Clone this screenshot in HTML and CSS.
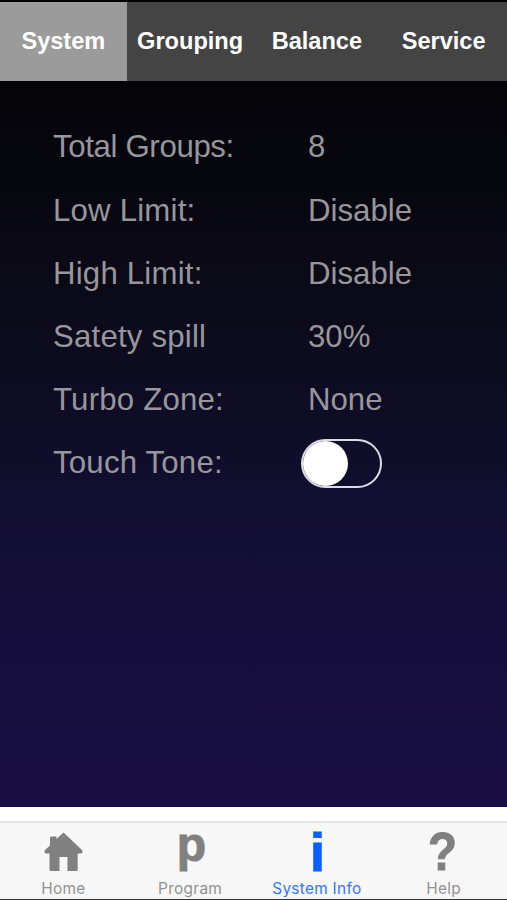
FILE: index.html
```html
<!DOCTYPE html>
<html lang="en">
<head>
<meta charset="utf-8">
<title>System Info</title>
<link rel="stylesheet" href="styles.css">
</head>
<body>
<div class="app">
  <nav class="tabs">
    <a class="tab tab-active">System</a>
    <a class="tab">Grouping</a>
    <a class="tab">Balance</a>
    <a class="tab">Service</a>
  </nav>
  <main class="panel">
    <dl class="settings">
      <dt class="tight">Total Groups:</dt><dd>8</dd>
      <dt>Low Limit:</dt><dd>Disable</dd>
      <dt>High Limit:</dt><dd>Disable</dd>
      <dt>Satety spill</dt><dd>30%</dd>
      <dt>Turbo Zone:</dt><dd>None</dd>
      <dt>Touch Tone:</dt><dd><span class="switch"><span class="knob"></span></span></dd>
    </dl>
  </main>
  <footer class="bar">
    <a class="item">
      <svg class="icon" viewBox="0 0 50 46"><path d="M25.500 7.500 44 25Q45.500 28 43 28.500H39.700V44.500Q39.700 46 38 46H29.500V32H21.500V46H13Q11.500 46 11.500 44.500V28.500H8Q5.500 28 7 25L12 20.500V13Q12 11.500 13.500 11.500H18.500V14Z"/></svg>
      <span class="label">Home</span>
    </a>
    <a class="item">
      <svg class="icon" viewBox="0 0 50 46"><text class="letter" x="26.500" y="35.500" font-size="48">p</text></svg>
      <span class="label">Program</span>
    </a>
    <a class="item item-active">
      <svg class="icon" viewBox="0 0 50 46"><text class="info" x="25.500" y="45.500" font-size="54">i</text></svg>
      <span class="label">System Info</span>
    </a>
    <a class="item">
      <svg class="icon" viewBox="0 0 50 46"><text class="letter" x="23.500" y="45" font-size="53" textLength="29" lengthAdjust="spacingAndGlyphs">?</text></svg>
      <span class="label">Help</span>
    </a>
  </footer>
</div>
</body>
</html>
```
FILE: styles.css
```css
* { box-sizing: border-box; }
body { margin: 0; background: #000; }
.app {
  width: 507px;
  height: 900px;
  display: flex;
  flex-direction: column;
  border-top: 2px solid #020202;
  border-bottom: 1px solid #333;
  font-family: "Liberation Sans", Arial, sans-serif;
}
.tabs {
  height: 79px;
  display: grid;
  grid-template-columns: repeat(4, 1fr);
  background: #444;
}
.tab {
  display: flex;
  align-items: center;
  justify-content: center;
  color: #fff;
  font-size: 23.6px;
  font-weight: bold;
}
.tab-active { background: #9b9b9b; }
.panel {
  flex: 1;
  padding: 34.800px 0 0 53px;
  background: linear-gradient(#040408 0%, #0b0a17 28%, #100d29 50%, #160f3c 75%, #190f45 100%);
}
.settings {
  margin: 0;
  display: grid;
  grid-template-columns: 255px 1fr;
  grid-auto-rows: 63.2px;
  align-items: center;
  color: #98969d;
  font-size: 31.2px;
}
.settings dt { letter-spacing: 0.200px; }
.settings .tight { letter-spacing: -0.350px; }
.settings dd { margin: 0; }
.switch {
  display: block;
  width: 81px;
  height: 49px;
  margin: 0 0 0 -7px;
  border: 2.500px solid #dddbe6;
  border-radius: 25px;
}
.knob {
  display: block;
  width: 45px;
  height: 45px;
  border-radius: 50%;
  background: #fff;
}
.bar {
  height: 92px;
  display: grid;
  grid-template-columns: repeat(4, 1fr);
  border-top: 14px solid #fff;
  background: linear-gradient(#e6e6e6 2px, #f7f7f7 2px);
}
.item {
  display: flex;
  flex-direction: column;
  align-items: center;
  color: #929292;
}
.icon {
  width: 50px;
  height: 46px;
  margin-top: 4px;
  overflow: visible;
  fill: #808080;
}
.icon text { font-weight: bold; text-anchor: middle; }
.letter { stroke: #808080; stroke-width: 1px; }
.label {
  margin-top: 8px;
  font: 15.400px/20px Inter, sans-serif;
  letter-spacing: 0.300px;
}
.item-active { color: #3478f6; }
.item-active .icon { fill: #0a60ff; }
.info { stroke: #0a60ff; stroke-width: 1px; }
```
